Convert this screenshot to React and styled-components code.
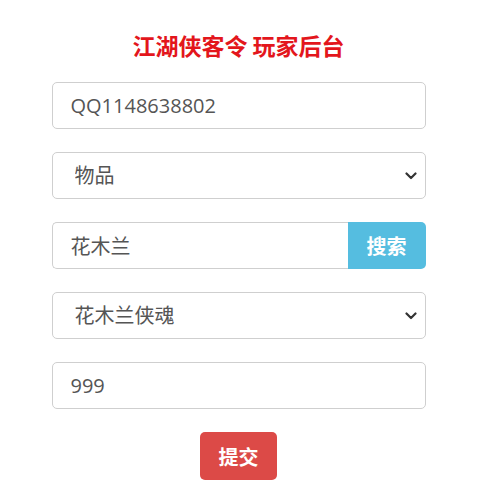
import React from "react";
import styled, { createGlobalStyle } from "styled-components";

const Global = createGlobalStyle`
  html, body { margin: 0; padding: 0; background: #fff; }
  body { font-family: "Open Sans", "Noto Sans CJK SC", sans-serif; }
  * { box-sizing: border-box; }
`;

const Page = styled.div`
  width: 374px;
  margin: 0 auto;
  padding-top: 31px;
  display: flex;
  flex-direction: column;
  align-items: stretch;
`;

const Title = styled.h1`
  margin: 0 0 23px;
  height: 28px;
  line-height: 28px;
  text-align: center;
  font-family: "Noto Sans CJK SC", sans-serif;
  font-size: 23px;
  font-weight: 700;
  color: #e3161c;
`;

const Form = styled.form`
  display: flex;
  flex-direction: column;
  gap: 23px;
`;

const fieldBase = `
  height: 47px;
  border: 1px solid #cfcfcf;
  border-radius: 5px;
  background: #fff;
  color: #555;
  font-family: "Open Sans", "Noto Sans CJK SC", sans-serif;
  font-size: 20px;
  outline: none;
`;

const TextInput = styled.input`
  ${fieldBase}
  width: 100%;
  padding: 0 18px;
  ${(p) => p.$joined && `border-top-right-radius: 0; border-bottom-right-radius: 0; border-right: none;`}
`;

const SelectWrap = styled.div`
  position: relative;
  width: 100%;
`;

const Select = styled.select`
  ${fieldBase}
  width: 100%;
  padding: 0 40px 0 22px;
  appearance: none;
  -webkit-appearance: none;
`;

const Chevron = styled.svg`
  position: absolute;
  right: 9px;
  top: 50%;
  width: 12px;
  height: 8px;
  margin-top: -4px;
  pointer-events: none;
`;

const Group = styled.div`
  display: flex;
  width: 100%;
`;

const SearchButton = styled.button`
  flex: 0 0 78px;
  height: 47px;
  border: none;
  border-radius: 0 5px 5px 0;
  background: #55bde0;
  color: #fff;
  font-family: "Noto Sans CJK SC", sans-serif;
  font-size: 20px;
  font-weight: 700;
  cursor: pointer;
`;

const Actions = styled.div`
  display: flex;
  justify-content: center;
  margin-top: 23px;
`;

const SubmitButton = styled.button`
  width: 77px;
  height: 48px;
  border: none;
  border-radius: 5px;
  background: #dc4a47;
  color: #fff;
  font-family: "Noto Sans CJK SC", sans-serif;
  font-size: 20px;
  font-weight: 700;
  cursor: pointer;
`;

function Dropdown({ value }) {
  return (
    <SelectWrap>
      <Select defaultValue={value}>
        <option value={value}>{value}</option>
      </Select>
      <Chevron viewBox="0 0 12 8">
        <path d="M1.5 1.5 L6 6 L10.5 1.5" fill="none" stroke="#333" strokeWidth="2.2" strokeLinecap="round" strokeLinejoin="round" />
      </Chevron>
    </SelectWrap>
  );
}

export default function App() {
  return (
    <>
      <Global />
      <Page>
        <Title>江湖侠客令 玩家后台</Title>
        <Form onSubmit={(e) => e.preventDefault()}>
          <TextInput defaultValue="QQ1148638802" />
          <Dropdown value="物品" />
          <Group>
            <TextInput $joined defaultValue="花木兰" />
            <SearchButton type="button">搜索</SearchButton>
          </Group>
          <Dropdown value="花木兰侠魂" />
          <TextInput defaultValue="999" />
        </Form>
        <Actions>
          <SubmitButton type="button">提交</SubmitButton>
        </Actions>
      </Page>
    </>
  );
}
